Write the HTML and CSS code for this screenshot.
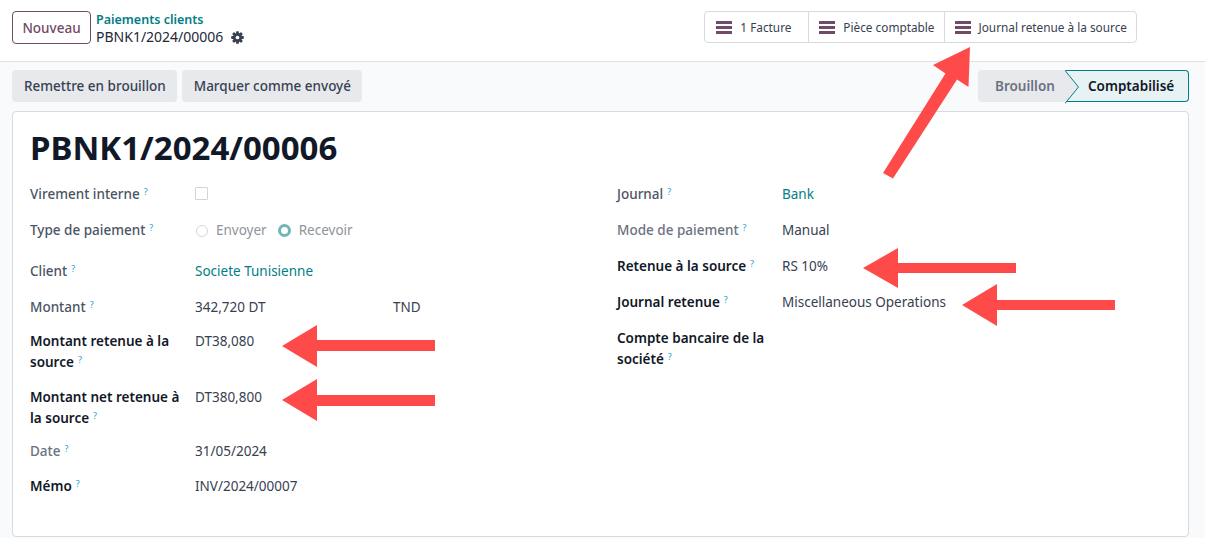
FILE: index.html
```html
<!DOCTYPE html>
<html lang="fr">
<head>
<meta charset="utf-8">
<title>PBNK1/2024/00006</title>
<link rel="stylesheet" href="styles.css">
</head>
<body>
<div class="page">
  <header class="control-panel">
    <div class="cp-left">
      <button class="btn-new">Nouveau</button>
      <div class="breadcrumb">
        <a class="bc-parent">Paiements clients</a>
        <div class="bc-current">PBNK1/2024/00006
          <svg class="gear" width="13" height="13" viewBox="0 0 12 12"><g fill="#374151"><rect x="4.7" y="0.2" width="2.6" height="11.6" rx="0.6"/><rect x="4.7" y="0.2" width="2.6" height="11.6" rx="0.6" transform="rotate(45 6 6)"/><rect x="4.7" y="0.2" width="2.6" height="11.6" rx="0.6" transform="rotate(90 6 6)"/><rect x="4.7" y="0.2" width="2.6" height="11.6" rx="0.6" transform="rotate(135 6 6)"/><circle cx="6" cy="6" r="4.2"/></g><circle cx="6" cy="6" r="1.7" fill="#fff"/></svg>
        </div>
      </div>
    </div>
    <div class="smart-buttons">
      <button class="smart-btn first"><span class="burger"><i></i><i></i><i></i></span>1 Facture</button>
      <button class="smart-btn"><span class="burger"><i></i><i></i><i></i></span>Pièce comptable</button>
      <button class="smart-btn"><span class="burger"><i></i><i></i><i></i></span>Journal retenue à la source</button>
    </div>
  </header>

  <div class="action-bar">
    <div class="actions">
      <button class="btn-secondary">Remettre en brouillon</button>
      <button class="btn-secondary">Marquer comme envoyé</button>
    </div>
    <div class="statusbar">
      <span class="status-item">Brouillon</span>
      <span class="status-item current">
        <svg class="chevron" width="15" height="34" viewBox="0 0 15 34"><polygon points="0,0 13.5,17 0,34" fill="#e7e9ed"/><polyline points="0,0.5 13.5,17 0,33.5" fill="none" stroke="#017e84" stroke-width="1"/></svg>
        Comptabilisé
      </span>
    </div>
  </div>

  <main class="sheet">
    <h1 class="title">PBNK1/2024/00006</h1>
    <div class="groups">
      <div class="group">
        <div class="row row-check">
          <div class="label muted">Virement interne<sup>?</sup></div>
          <div class="value"><span class="checkbox"></span></div>
        </div>
        <div class="row row-radio">
          <div class="label muted">Type de paiement<sup>?</sup></div>
          <div class="value radios">
            <span class="radio"></span><span class="radio-label">Envoyer</span>
            <span class="radio checked"></span><span class="radio-label">Recevoir</span>
          </div>
        </div>
        <div class="row row-input">
          <div class="label muted">Client<sup>?</sup></div>
          <div class="value"><a class="link">Societe Tunisienne</a></div>
        </div>
        <div class="row row-tight">
          <div class="label muted">Montant<sup>?</sup></div>
          <div class="value amount"><span class="amount-val">342,720 DT</span><span>TND</span></div>
        </div>
        <div class="row">
          <div class="label strong">Montant retenue à la source<sup>?</sup></div>
          <div class="value">DT38,080</div>
        </div>
        <div class="row row-tight2">
          <div class="label strong">Montant net retenue à la source<sup>?</sup></div>
          <div class="value">DT380,800</div>
        </div>
        <div class="row">
          <div class="label light">Date<sup>?</sup></div>
          <div class="value">31/05/2024</div>
        </div>
        <div class="row">
          <div class="label strong">Mémo<sup>?</sup></div>
          <div class="value">INV/2024/00007</div>
        </div>
      </div>
      <div class="group group-right">
        <div class="row">
          <div class="label muted">Journal<sup>?</sup></div>
          <div class="value"><a class="link">Bank</a></div>
        </div>
        <div class="row">
          <div class="label light">Mode de paiement<sup>?</sup></div>
          <div class="value">Manual</div>
        </div>
        <div class="row">
          <div class="label strong">Retenue à la source<sup>?</sup></div>
          <div class="value">RS 10%</div>
        </div>
        <div class="row">
          <div class="label strong">Journal retenue<sup>?</sup></div>
          <div class="value">Miscellaneous Operations</div>
        </div>
        <div class="row">
          <div class="label strong">Compte bancaire de la société<sup>?</sup></div>
          <div class="value"></div>
        </div>
      </div>
    </div>
  </main>

  <svg class="annotations" width="1205" height="538" viewBox="0 0 1205 538">
    <g fill="#ff4a4a">
      <polygon points="970,47 968.5,87 957,79.5 893,178.5 883,173 945.5,73.5 933,65"/>
      <polygon points="863,268 898,248 898,263 1016,263 1016,273 898,273 898,288"/>
      <polygon points="962,305 997,284 997,300 1115,300 1115,310 997,310 997,326"/>
      <polygon points="282,346 317,325 317,340 435,340 435,351 317,351 317,367"/>
      <polygon points="282,400 317,379 317,395 435,395 435,406 317,406 317,421"/>
    </g>
  </svg>
</div>
</body>
</html>
```

FILE: styles.css
```css
* { box-sizing: border-box; }
html, body { margin: 0; padding: 0; }
body {
  background: #f9fafb;
  font-family: "Noto Sans", "DejaVu Sans", sans-serif;
  color: #374151;
  font-size: 13.5px;
  width: 1205px;
  height: 538px;
  overflow: hidden;
}
button { font-family: inherit; cursor: pointer; }
a { text-decoration: none; }

.page { position: relative; width: 1205px; height: 538px; }

/* ---------- control panel ---------- */
.control-panel {
  height: 62px;
  background: #fff;
  border-bottom: 1px solid #dee2e6;
  display: flex;
  align-items: flex-start;
  justify-content: space-between;
  padding: 11px 68px 0 12px;
}
.cp-left { display: flex; align-items: flex-start; gap: 5px; }
.btn-new {
  height: 33px;
  width: 79px;
  padding: 0;
  border: 1px solid #714b67;
  border-radius: 4px;
  background: #fff;
  color: #714b67;
  font-size: 13.5px;
  font-weight: 500;
}
.breadcrumb { display: flex; flex-direction: column; }
.bc-parent {
  color: #017e84;
  font-size: 12.5px;
  font-weight: 600;
  line-height: 17px;
}
.bc-current {
  color: #1f2937;
  font-size: 14px;
  line-height: 17px;
  display: flex;
  align-items: center;
  gap: 8px;
}
.gear { margin-top: 1px; }

.smart-buttons {
  display: flex;
  height: 32px;
  border: 1px solid #d8dadd;
  border-radius: 4px;
  background: #fff;
}
.smart-btn {
  display: flex;
  align-items: center;
  gap: 8px;
  height: 100%;
  border: 0;
  background: transparent;
  padding: 0 9px 0 10px;
  font-size: 11.8px;
  color: #374151;
}
.smart-btn.first { min-width: 103px; padding-left: 11px; }
.smart-btn + .smart-btn { border-left: 1px solid #d8dadd; }
.burger {
  display: flex;
  flex-direction: column;
  justify-content: space-between;
  width: 16px;
  height: 13px;
}
.burger i { display: block; height: 3px; background: #714b67; }

/* ---------- action bar ---------- */
.action-bar {
  display: flex;
  justify-content: space-between;
  align-items: flex-start;
  padding: 8px 16px 0 12px;
  height: 49px;
}
.actions { display: flex; gap: 5px; }
.btn-secondary {
  height: 32px;
  border: 0;
  border-radius: 4px;
  background: #e7e9ed;
  color: #374151;
  font-size: 13.5px;
  font-weight: 500;
  padding: 0 11px 0 12px;
}
.statusbar { display: flex; height: 32px; }
.status-item {
  display: flex;
  align-items: center;
  font-size: 13.5px;
  font-weight: 600;
  color: #6b7280;
  background: #e7e9ed;
  border-radius: 4px 0 0 4px;
  padding: 0 11px 0 17px;
  width: 87px;
}
.status-item.current {
  position: relative;
  width: 124px;
  color: #111827;
  background: #e6f2f3;
  border: 1px solid #017e84;
  border-left: 0;
  border-radius: 0 4px 4px 0;
  padding-left: 23px;
}
.chevron { position: absolute; left: 0; top: -1px; }

/* ---------- sheet ---------- */
.sheet {
  margin: 0 16px 0 12px;
  height: 426px;
  background: #fff;
  border: 1px solid #d8dadd;
  border-radius: 4px;
  padding: 16px 17px 0 17px;
}
.title {
  margin: 0;
  font-size: 33px;
  line-height: 40px;
  font-weight: 700;
  color: #111827;
}
.groups {
  display: grid;
  grid-template-columns: 1fr 1fr;
  column-gap: 33px;
  margin-top: 16px;
}
.row {
  display: flex;
  align-items: flex-start;
  line-height: 21px;
  margin-bottom: 14px;
}
.row-check { margin-bottom: 15px; }
.row-radio { margin-bottom: 20px; }
.row-input { margin-bottom: 15px; }
.row-tight { margin-bottom: 13px; }
.row-tight2 { margin-bottom: 12px; }
.group-right .row { margin-bottom: 15px; }
.label {
  width: 165px;
  flex: none;
  padding-right: 12px;
  font-size: 13.5px;
}
.label sup {
  font-size: 9px;
  line-height: 9px;
  color: #1b9fd0;
  font-weight: 400;
  margin-left: 4px;
  vertical-align: 4px;
}
.label.muted { color: #4b5563; font-weight: 500; }
.label.light { color: #6b7280; font-weight: 500; }
.label.strong { color: #111827; font-weight: 600; }
.value { flex: 1; color: #374151; font-size: 13.5px; }
.link { color: #017e84; }

.checkbox {
  display: block;
  width: 13px;
  height: 13px;
  margin-top: 3px;
  border: 1px solid #d1d5db;
  border-radius: 1px;
}
.radios { display: flex; align-items: center; height: 21px; }
.radio {
  width: 12px;
  height: 12px;
  border: 1px solid #d1d5db;
  border-radius: 50%;
  margin-left: 1px;
  margin-right: 8px;
  flex: none;
}
.radio.checked {
  border: 3.5px solid #6fb6b9;
  margin-left: 11px;
  width: 13px;
  height: 13px;
}
.radio-label { color: #8f949c; }
.amount { display: flex; }
.amount-val { width: 198px; }

/* ---------- annotation overlay ---------- */
.annotations { position: absolute; left: 0; top: 0; pointer-events: none; }
```
